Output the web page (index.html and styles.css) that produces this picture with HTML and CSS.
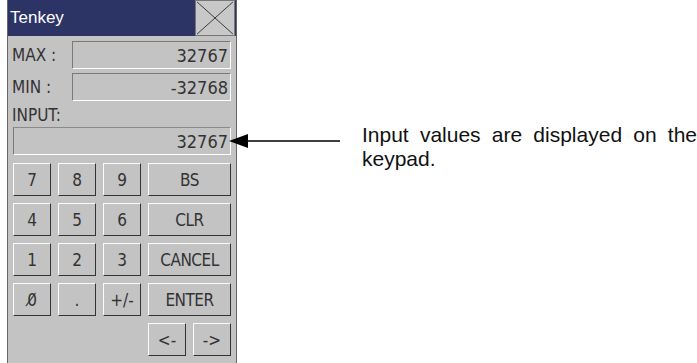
FILE: index.html
```html
<!DOCTYPE html>
<html lang="en">
<head>
  <meta charset="UTF-8">
  <meta name="viewport" content="width=device-width, initial-scale=1.0">
  <title>Tenkey</title>
  <link rel="stylesheet" href="styles.css">
</head>
<body>
  <div class="panel">
    <div class="titlebar">
      <span class="title">Tenkey</span>
      <div class="close">
        <svg width="40" height="36" viewBox="0 0 40 36">
          <line x1="1" y1="1" x2="39" y2="35" stroke="#333" stroke-width="1"/>
          <line x1="39" y1="1" x2="1" y2="35" stroke="#333" stroke-width="1"/>
        </svg>
      </div>
    </div>

    <div class="content">
      <div class="row range">
        <span class="label">MAX :</span>
        <div class="field">32767</div>
      </div>
      <div class="row range">
        <span class="label">MIN :</span>
        <div class="field">-32768</div>
      </div>

      <div class="label input-label">INPUT:</div>
      <div class="field input-field">32767</div>

      <div class="keys">
        <button class="key">7</button>
        <button class="key">8</button>
        <button class="key">9</button>
        <button class="key wide">BS</button>
        <button class="key">4</button>
        <button class="key">5</button>
        <button class="key">6</button>
        <button class="key wide">CLR</button>
        <button class="key">1</button>
        <button class="key">2</button>
        <button class="key">3</button>
        <button class="key wide">CANCEL</button>
        <button class="key">0&#824;</button>
        <button class="key">.</button>
        <button class="key">+/-</button>
        <button class="key wide">ENTER</button>
      </div>

      <div class="cursor-keys">
        <button class="key">&lt;-</button>
        <button class="key">-&gt;</button>
      </div>
    </div>
  </div>

  <div class="note">
    <svg class="arrow" width="111" height="26" viewBox="0 0 111 26">
      <polygon points="0,18 19,11 19,25" fill="#000"/>
      <line x1="18" y1="18" x2="111" y2="18" stroke="#000" stroke-width="1.5"/>
    </svg>
    <div class="note-text">
      <span class="note-line">Input values are displayed on the</span>
      <span class="note-line last">keypad.</span>
    </div>
  </div>
</body>
</html>
```

FILE: styles.css
```css
body {
  margin: 0;
  display: flex;
  align-items: flex-start;
  font-family: "Liberation Sans", Arial, sans-serif;
  background: #fff;
  height: 363px;
  overflow: hidden;
}

.panel {
  width: 229px;
  height: 363px;
  margin-left: 7px;
  background-color: #c3c3c3;
  border-left: 1px solid #666;
  border-right: 1px solid #666;
  font-family: "DejaVu Sans Condensed", "DejaVu Sans", sans-serif;
  font-stretch: condensed;
  color: #333;
}

.titlebar {
  height: 36px;
  display: flex;
  align-items: center;
  justify-content: space-between;
  background-color: #2c3466;
}

.title {
  color: #fff;
  font-family: "Liberation Sans", Arial, sans-serif;
  font-size: 17px;
  padding-left: 2px;
}

.close {
  width: 40px;
  height: 36px;
  margin-right: 1px;
  background-color: #c8c8c8;
  box-sizing: border-box;
  border: 1px solid #777;
}

.close svg {
  display: block;
  width: 38px;
  height: 34px;
}

.content {
  padding: 5px 5px 0 4px;
}

.row {
  display: flex;
  align-items: center;
  margin-bottom: 4px;
}

.label {
  font-size: 17px;
  line-height: 17px;
}

.range .label {
  width: 60px;
}

.field {
  flex: 1;
  height: 28px;
  box-sizing: border-box;
  border: 1px solid;
  border-color: #7a7a7a #fff #fff #7a7a7a;
  text-align: right;
  padding-right: 2px;
  font-size: 18px;
  line-height: 27px;
}

.input-label {
  margin-top: 6px;
}

.input-field {
  margin: 3px 0 0 1px;
  border-top-color: #8a8a8a;
}

.keys {
  display: grid;
  grid-template-columns: 38px 38px 38px 83px;
  gap: 7px;
  margin: 8px 0 0 1px;
}

.key {
  height: 33px;
  padding: 0;
  background-color: #c3c3c3;
  border: 1px solid;
  border-color: #fafafa #333 #333 #fafafa;
  font-family: inherit;
  font-size: 17px;
  color: #333;
}

.wide {
  letter-spacing: -0.5px;
}

.cursor-keys {
  display: flex;
  justify-content: flex-end;
  gap: 7px;
  margin-top: 7px;
}

.cursor-keys .key {
  width: 38px;
}

.note {
  display: flex;
  align-items: flex-start;
  margin-top: 123px;
}

.arrow {
  display: block;
  margin-left: -8px;
}

.note-text {
  margin-left: 22px;
  width: 335px;
  font-size: 21px;
  line-height: 24px;
  color: #111;
}

.note-line {
  display: block;
  text-align: justify;
  text-align-last: justify;
}

.note-line.last {
  text-align-last: left;
}
```
